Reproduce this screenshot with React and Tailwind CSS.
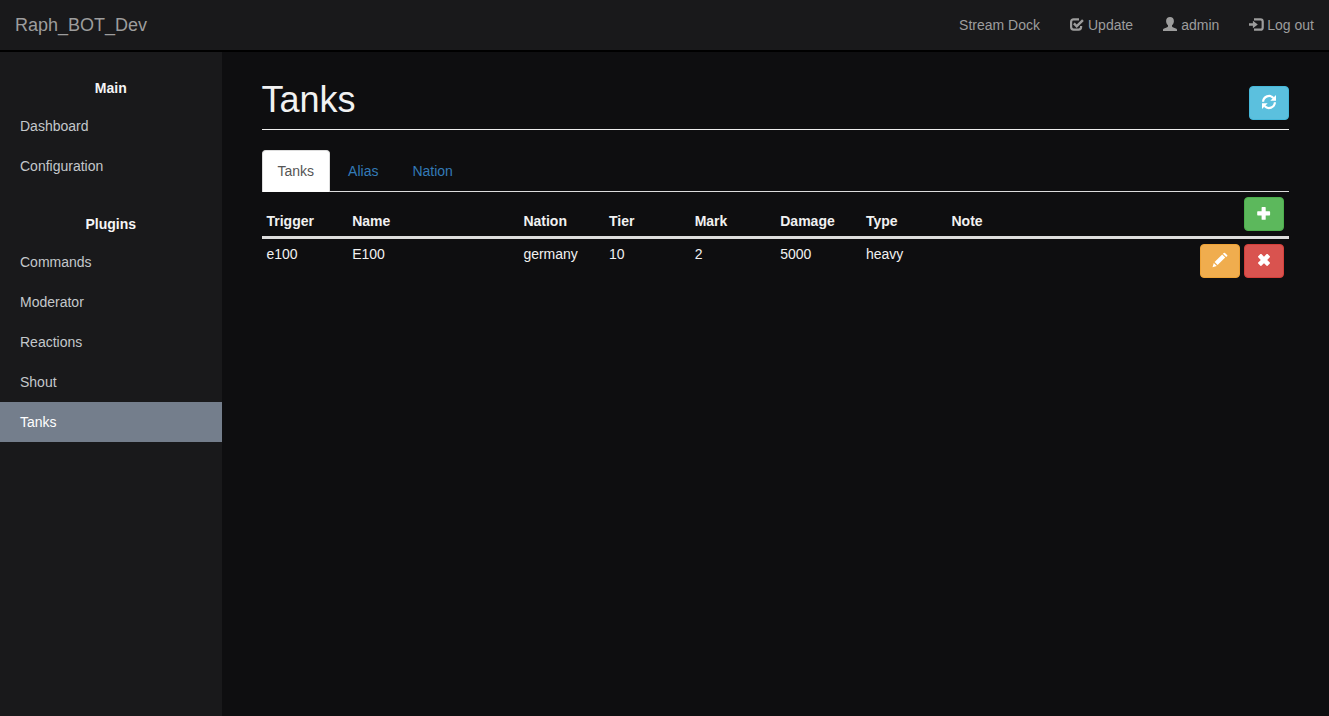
import React from "react";

function Icon({ children }) {
  return (
    <svg
      aria-hidden="true"
      viewBox="0 0 14 14"
      className="block size-3.5 shrink-0 overflow-visible"
      fill="currentColor"
    >
      {children}
    </svg>
  );
}

const CheckIcon = () => (
  <Icon>
    <path
      d="M9 1.400H3.600Q1.100 1.400 1.100 3.900v5.200Q1.100 11.600 3.600 11.600h5q2.500 0 2.500-2.500V8"
      fill="none"
      stroke="currentColor"
      strokeWidth="2.2"
    />
    <path d="M3 6.300 4.700 4.600l2 2L12.100 1.200l1.700 1.700-7.100 7.100z" />
  </Icon>
);

const UserIcon = () => (
  <Icon>
    <path d="M7-1c2.400 0 3.900 1.500 3.900 4 0 1.900-.7 3.400-1.900 4.300v1c0 .5.300.8.800 1l3.100 1.200c.8.300 1.100.8 1.100 1.400V13H0v-1.100c0-.6.300-1.100 1.100-1.400l3.100-1.200c.5-.2.800-.5.800-1v-1C3.800 6.400 3.100 4.900 3.100 3 3.100.5 4.600-1 7-1z" />
  </Icon>
);

const LogInIcon = () => (
  <Icon>
    <path d="M0 5.200h3.900V2.700L8.800 6.500l-4.900 3.800V7.800H0z" />
    <path
      d="M5 1.300h6.400Q13.700 1.300 13.700 3.600v5.800q0 2.300-2.300 2.300H5"
      fill="none"
      stroke="currentColor"
      strokeWidth="2.200"
    />
  </Icon>
);

const RefreshIcon = () => (
  <Icon>
    <path
      d="M1.100 6.700A5.900 5.900 0 0 1 11.400 3M12.900 7.300A5.900 5.900 0 0 1 2.600 11"
      fill="none"
      stroke="currentColor"
      strokeWidth="2.200"
    />
    <path d="M14 0v5.700H8.300zM0 14V8.300h5.700z" />
  </Icon>
);

const PlusIcon = () => (
  <Icon>
    <path d="M5.200.9h2.900q.6 0 .6.600v3.800h3.800q.6 0 .6.600v2.900q0 .6-.6.600H8.700v3.800q0 .6-.6.600H5.200q-.6 0-.6-.6V9.400H.8q-.6 0-.6-.6V5.900q0-.6.600-.6h3.800V1.500q0-.6.600-.6z" />
  </Icon>
);

const PencilIcon = () => (
  <Icon>
    <path d="m-.5 14.200 1.300-4.300 3 3zM1.600 9.100 9.200 1.500l3 3-7.600 7.600zM9.900.8l.8-.8q.6-.6 1.300 0l2.100 2.100q.6.600 0 1.200l-.9.800z" />
  </Icon>
);

const RemoveIcon = () => (
  <Icon>
    <path d="M3.400 1.100q.5-.4 1 0L7 3.700l2.600-2.600q.5-.4 1 0l2.200 2.200q.4.500 0 1L10.200 7l2.600 2.600q.4.500 0 1l-2.200 2.200q-.5.400-1 0L7 10.300l-2.600 2.500q-.5.400-1 0l-2.200-2.200q-.4-.5 0-1L3.800 7 1.200 4.300q-.4-.5 0-1z" />
  </Icon>
);

const tones = {
  info: "border-[#46b8da] bg-[#5bc0de]",
  success: "border-[#4cae4c] bg-[#5cb85c]",
  warning: "border-[#eea236] bg-[#f0ad4e]",
  danger: "border-[#d43f3a] bg-[#d9534f]",
};

function IconButton({ tone, label, children }) {
  return (
    <button
      type="button"
      aria-label={label}
      className={`inline-flex h-[34px] w-10 cursor-pointer items-start justify-center rounded border pt-2 text-white ${tones[tone]}`}
    >
      {children}
    </button>
  );
}

function NavLink({ icon, children }) {
  return (
    <a href="#" className="flex items-center gap-1 px-[15px] py-[15px] hover:text-white">
      {icon}
      {children}
    </a>
  );
}

function SideSection({ title, items, active, className }) {
  return (
    <section className={className}>
      <h2 className="mb-2 text-center font-bold text-[#f5f5f5]">{title}</h2>
      <ul>
        {items.map((item) => (
          <li key={item}>
            <a
              href="#"
              aria-current={item === active ? "page" : undefined}
              className={`block px-5 py-2.5 ${
                item === active ? "bg-[#747e8c] text-white" : "text-[#c4c8cb]"
              }`}
            >
              {item}
            </a>
          </li>
        ))}
      </ul>
    </section>
  );
}

const columns = [
  ["Trigger", "w-1/12"],
  ["Name", "w-2/12"],
  ["Nation", "w-1/12"],
  ["Tier", "w-1/12"],
  ["Mark", "w-1/12"],
  ["Damage", "w-1/12"],
  ["Type", "w-1/12"],
  ["Note", "w-2/12"],
];

const tanks = [["e100", "E100", "germany", "10", "2", "5000", "heavy", ""]];

export default function App() {
  return (
    <div className="flex min-h-screen flex-col bg-[#0e0e10] font-['Liberation_Sans',Arial,sans-serif] text-sm leading-5 text-[#f1f1f1]">
      <header className="flex items-center justify-between border-b-2 border-black bg-[#19191b] text-[#9d9d9d]">
        <a href="#" className="px-[15px] text-lg leading-5">
          Raph_BOT_Dev
        </a>
        <nav className="flex">
          <NavLink>Stream Dock</NavLink>
          <NavLink icon={<CheckIcon />}>Update</NavLink>
          <NavLink icon={<UserIcon />}>admin</NavLink>
          <NavLink icon={<LogInIcon />}>Log out</NavLink>
        </nav>
      </header>

      <div className="flex grow">
        <aside className="w-1/6 shrink-0 bg-[#19191b]">
          <SideSection className="pt-[26px]" title="Main" items={["Dashboard", "Configuration"]} />
          <SideSection
            className="pt-7"
            title="Plugins"
            items={["Commands", "Moderator", "Reactions", "Shout", "Tanks"]}
            active="Tanks"
          />
        </aside>

        <main className="min-w-0 grow px-10 pt-7">
          <div className="flex items-start justify-between border-b border-[#eeeeee] pb-[9px]">
            <h1 className="text-[36px] leading-10">Tanks</h1>
            <div className="flex pt-1.5">
              <IconButton tone="info" label="Refresh">
                <RefreshIcon />
              </IconButton>
            </div>
          </div>

          <div role="tablist" className="mt-5 flex gap-0.5 border-b border-[#dddddd]">
            <button
              type="button"
              role="tab"
              aria-selected="true"
              className="-mb-px rounded-t border border-b-0 border-[#dddddd] bg-white px-[15px] pt-2.5 pb-[11px] text-[#555555]"
            >
              Tanks
            </button>
            <button type="button" role="tab" aria-selected="false" className="px-4 py-2.5 text-[#337ab7]">
              Alias
            </button>
            <button type="button" role="tab" aria-selected="false" className="px-4 py-2.5 text-[#337ab7]">
              Nation
            </button>
          </div>

          <table className="w-full table-fixed border-collapse text-left">
            <thead>
              <tr className="border-b-3 border-[#dddddd] align-bottom">
                {columns.map(([name, width]) => (
                  <th key={name} scope="col" className={`p-[5px] font-bold ${width}`}>
                    {name}
                  </th>
                ))}
                <th className="w-2/12 p-[5px]">
                  <div className="flex justify-end">
                    <IconButton tone="success" label="Add tank">
                      <PlusIcon />
                    </IconButton>
                  </div>
                </th>
              </tr>
            </thead>
            <tbody>
              {tanks.map((row) => (
                <tr key={row[0]} className="align-top">
                  {row.map((cell, i) => (
                    <td key={columns[i][0]} className="p-[5px]">
                      {cell}
                    </td>
                  ))}
                  <td className="p-[5px]">
                    <div className="flex justify-end gap-1">
                      <IconButton tone="warning" label="Edit tank">
                        <PencilIcon />
                      </IconButton>
                      <IconButton tone="danger" label="Delete tank">
                        <RemoveIcon />
                      </IconButton>
                    </div>
                  </td>
                </tr>
              ))}
            </tbody>
          </table>
        </main>
      </div>
    </div>
  );
}
